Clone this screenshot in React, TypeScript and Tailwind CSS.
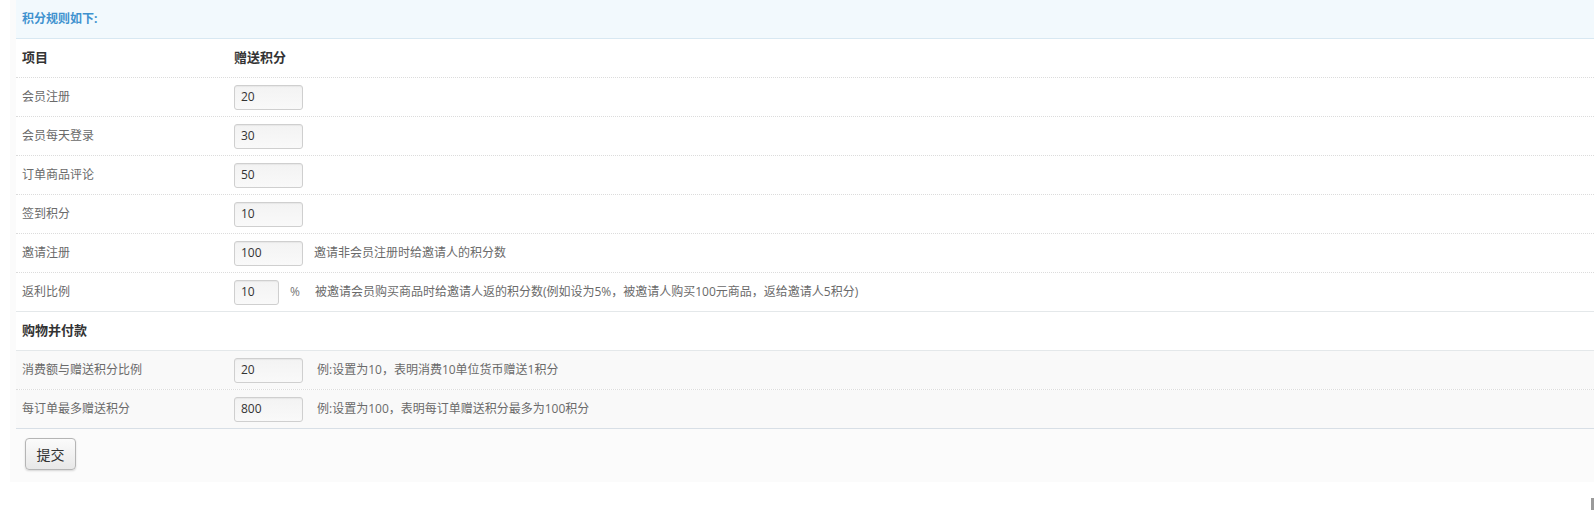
const font = "font-['Open_Sans','Noto_Sans_CJK_SC',sans-serif]";

type Row = {
  label: string;
  value: string;
  narrow?: boolean;
  unit?: string;
  note?: string;
};

const pointRows: Row[] = [
  { label: "会员注册", value: "20" },
  { label: "会员每天登录", value: "30" },
  { label: "订单商品评论", value: "50" },
  { label: "签到积分", value: "10" },
  { label: "邀请注册", value: "100", note: "邀请非会员注册时给邀请人的积分数" },
  {
    label: "返利比例",
    value: "10",
    narrow: true,
    unit: "%",
    note: "被邀请会员购买商品时给邀请人返的积分数(例如设为5%，被邀请人购买100元商品，返给邀请人5积分)",
  },
];

const shopRows: Row[] = [
  { label: "消费额与赠送积分比例", value: "20", note: "例:设置为10，表明消费10单位货币赠送1积分" },
  { label: "每订单最多赠送积分", value: "800", note: "例:设置为100，表明每订单赠送积分最多为100积分" },
];

function Field({ row, shaded }: { row: Row; shaded?: boolean }) {
  return (
    <div className={`flex h-[38px] items-center ${shaded ? "bg-[#f9f9f9]" : "bg-white"}`}>
      <div className="w-[218px] shrink-0 pl-[6px] text-[12px] text-[#6a6a6a]">{row.label}</div>
      <div
        className={`flex h-[25px] items-center rounded-[3px] border border-[#cfcfcf] bg-gradient-to-b from-[#f3f3f3] to-[#f9f9f9] pl-[6px] text-[12px] text-[#333] shadow-[inset_0_1px_1px_rgba(0,0,0,0.05)] ${
          row.narrow ? "w-[45px]" : "w-[69px]"
        }`}
      >
        {row.value}
      </div>
      {row.unit ? <span className="ml-[11px] text-[12px] text-[#777]">{row.unit}</span> : null}
      {row.note ? (
        <span className={`text-[12px] text-[#6a6a6a] ${row.unit ? "ml-[15px]" : shaded ? "ml-[14px]" : "ml-[11px]"}`}>
          {row.note}
        </span>
      ) : null}
    </div>
  );
}

export default function App() {
  return (
    <div className={`relative h-[510px] w-[1594px] bg-white ${font}`}>
      <div className="ml-[10px] h-[482px] bg-[#fbfbfb]">
        <div className="ml-[6px]">
          <div className="flex h-[39px] items-center border-b border-[#d8e8f2] bg-[#f2f9fd] pl-[6px] text-[12px] font-bold text-[#3f92cf]">
            积分规则如下:
          </div>

          <div className="bg-white">
            <div className="flex h-[39px] items-center border-b border-dotted border-[#dcdcdc] text-[13px] font-bold text-[#333]">
              <div className="w-[218px] shrink-0 pl-[6px]">项目</div>
              <div>赠送积分</div>
            </div>

            {pointRows.map((row, i) => (
              <div
                key={row.label}
                className={i < pointRows.length - 1 ? "border-b border-dotted border-[#dcdcdc]" : "border-b border-[#e4e8ea]"}
              >
                <Field row={row} />
              </div>
            ))}

            <div className="flex h-[39px] items-center border-b border-[#e4e8ea] pl-[6px] text-[13px] font-bold text-[#333]">
              购物并付款
            </div>

            {shopRows.map((row, i) => (
              <div
                key={row.label}
                className={i < shopRows.length - 1 ? "border-b border-dotted border-[#dcdcdc]" : "border-b border-[#d8dfe6]"}
              >
                <Field row={row} shaded />
              </div>
            ))}
          </div>

          <div className="pt-[9px] pl-[9px]">
            <button
              type="button"
              className="flex h-[32px] w-[51px] items-center justify-center rounded-[4px] border border-[#b5b5b5] bg-gradient-to-b from-[#fbfbfb] to-[#e8e8e8] text-[14px] text-[#333] shadow-[0_1px_2px_rgba(0,0,0,0.15)]"
            >
              提交
            </button>
          </div>
        </div>
      </div>
      <div className="absolute right-0 bottom-0 h-[12px] w-[3px] bg-[#9a9a9a]" />
    </div>
  );
}
